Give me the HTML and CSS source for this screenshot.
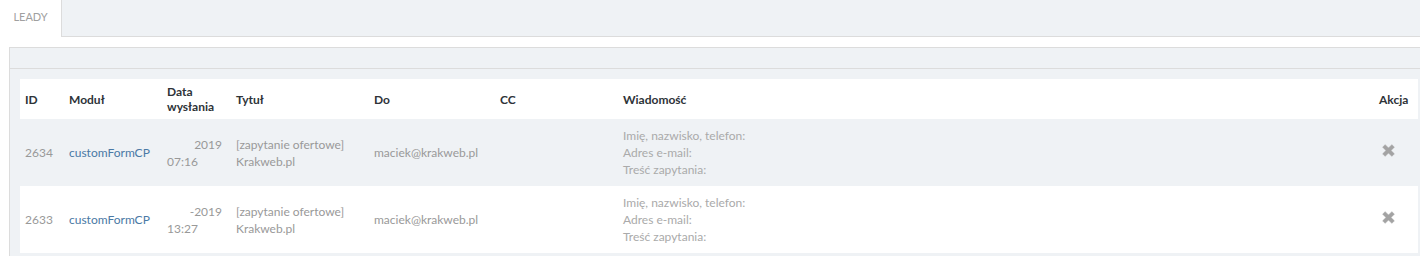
FILE: index.html
```html
<!DOCTYPE html>
<html lang="pl">
<head>
<meta charset="utf-8">
<title>Leady</title>
<link rel="stylesheet" href="styles.css">
</head>
<body>
<div class="tabs">
  <div class="tab active">LEADY</div>
  <div class="tab-rest"></div>
</div>
<div class="panel">
  <div class="panel-heading"></div>
  <div class="panel-body">
    <table class="grid">
      <colgroup>
        <col class="c-id"><col class="c-mod"><col class="c-date"><col class="c-title"><col class="c-to"><col class="c-cc"><col class="c-msg"><col class="c-act">
      </colgroup>
      <thead>
        <tr>
          <th>ID</th><th>Moduł</th><th class="th-date">Data<br>wysłania</th><th>Tytuł</th><th>Do</th><th>CC</th><th>Wiadomość</th><th>Akcja</th>
        </tr>
      </thead>
      <tbody>
        <tr>
          <td class="muted">2634</td>
          <td><a class="link" href="#">customFormCP</a></td>
          <td class="muted date"><div class="d1">2019</div><div class="d2">07:16</div></td>
          <td class="muted">[zapytanie ofertowe]<br>Krakweb.pl</td>
          <td class="muted">maciek@krakweb.pl</td>
          <td></td>
          <td class="msg">Imię, nazwisko, telefon:<br>Adres e-mail:<br>Treść zapytania:</td>
          <td class="act"><span class="del"><svg viewBox="0 0 12 12" width="13" height="13"><path d="M0.6 2.9 L2.9 0.6 L6 3.7 L9.1 0.6 L11.4 2.9 L8.3 6 L11.4 9.1 L9.1 11.4 L6 8.3 L2.9 11.4 L0.6 9.1 L3.7 6 Z" fill="currentColor" stroke="currentColor" stroke-width="0.5" stroke-linejoin="round"/></svg></span></td>
        </tr>
        <tr>
          <td class="muted">2633</td>
          <td><a class="link" href="#">customFormCP</a></td>
          <td class="muted date"><div class="d1">-2019</div><div class="d2">13:27</div></td>
          <td class="muted">[zapytanie ofertowe]<br>Krakweb.pl</td>
          <td class="muted">maciek@krakweb.pl</td>
          <td></td>
          <td class="msg">Imię, nazwisko, telefon:<br>Adres e-mail:<br>Treść zapytania:</td>
          <td class="act"><span class="del"><svg viewBox="0 0 12 12" width="13" height="13"><path d="M0.6 2.9 L2.9 0.6 L6 3.7 L9.1 0.6 L11.4 2.9 L8.3 6 L11.4 9.1 L9.1 11.4 L6 8.3 L2.9 11.4 L0.6 9.1 L3.7 6 Z" fill="currentColor" stroke="currentColor" stroke-width="0.5" stroke-linejoin="round"/></svg></span></td>
        </tr>
      </tbody>
    </table>
  </div>
</div>
</body>
</html>
```

FILE: styles.css
```css
html, body {
  margin: 0;
  padding: 0;
  overflow: hidden;
  background: #fff;
}
body {
  font-family: Lato, "Open Sans", "Liberation Sans", sans-serif;
  font-size: 12px;
  color: #333;
}
.tabs {
  display: flex;
  height: 37px;
}
.tab {
  width: 61px;
  box-sizing: border-box;
  padding-top: 10px;
  text-align: center;
  font-size: 11px;
  color: #a0a0a0;
  background: #fff;
}
.tab-rest {
  flex: 1;
  background: #eff2f5;
  border-left: 1px solid #dcdcdc;
  border-bottom: 1px solid #dcdcdc;
}
.panel {
  margin: 10px 0 0 9px;
  width: 1420px;
  box-sizing: border-box;
  border: 1px solid #dcdcdc;
  background: #eff2f5;
}
.panel-heading {
  height: 20px;
  border-bottom: 1px solid #dcdcdc;
}
.panel-body {
  padding: 10px;
}
.grid {
  width: 1398px;
  table-layout: fixed;
  border-collapse: collapse;
}
.c-id { width: 44px; }
.c-mod { width: 98px; }
.c-date { width: 69px; }
.c-title { width: 138px; }
.c-to { width: 126px; }
.c-cc { width: 123px; }
.c-msg { width: 756px; }
.c-act { width: 44px; }
.grid th {
  background: #fff;
  height: 40px;
  padding: 0 5px;
  text-align: left;
  font-weight: 700;
  color: #2e3338;
  line-height: 15px;
  vertical-align: middle;
}
.grid td {
  height: 67px;
  padding: 0 5px;
  vertical-align: middle;
  line-height: 17px;
}
.grid tbody tr:nth-child(even) td {
  background: #fff;
}
.muted { color: #999; }
.link {
  color: #4a79a5;
  text-decoration: none;
}
.msg {
  color: #aaa;
  line-height: 18px;
}
.date .d1 { text-align: right; padding-right: 4px; }
.date .d2 { text-align: left; }
.del {
  display: inline-block;
  margin-left: 3px;
  color: #a3a3a3;
  line-height: 0;
}
```
